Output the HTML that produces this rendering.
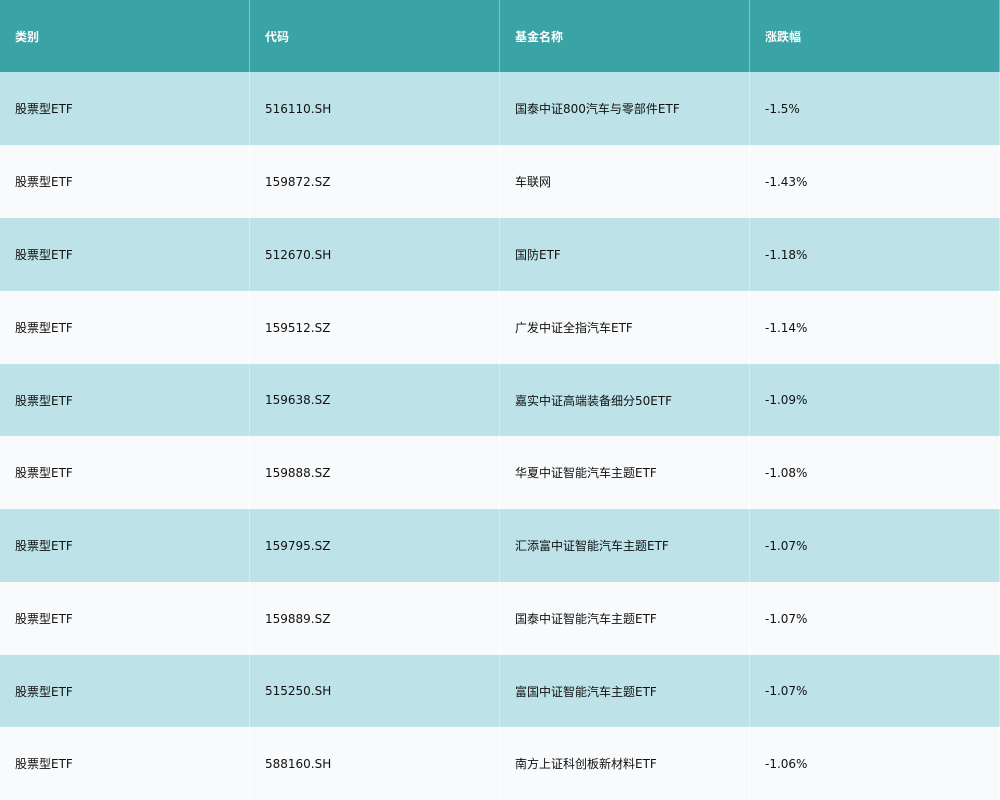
<!DOCTYPE html>
<html><head><meta charset="utf-8"><style>
body{margin:0;width:1000px;height:800px;overflow:hidden;font-family:"DejaVu Sans","Noto Sans CJK SC",sans-serif;font-size:12px;color:#111;}
.r{position:absolute;left:0;width:1000px;display:flex;}
.c{width:249px;border-right:1px solid rgba(255,255,255,.35);box-sizing:content-box;padding-left:15px;display:flex;align-items:center;box-sizing:border-box;width:250px;}
.h{background:#3aa3a6;color:#fff;font-weight:bold;}
.a{background:#bde3e9;}
.b{background:#f8fafc;}
.b .c{border-right:1px solid #fff;}
</style></head><body>
<div class="r h" style="top:0;height:72px"><div class="c">类别</div><div class="c">代码</div><div class="c">基金名称</div><div class="c">涨跌幅</div></div>
<div class="r a" style="top:72px;height:73px"><div class="c">股票型ETF</div><div class="c">516110.SH</div><div class="c">国泰中证800汽车与零部件ETF</div><div class="c">-1.5%</div></div>
<div class="r b" style="top:145px;height:73px"><div class="c">股票型ETF</div><div class="c">159872.SZ</div><div class="c">车联网</div><div class="c">-1.43%</div></div>
<div class="r a" style="top:218px;height:73px"><div class="c">股票型ETF</div><div class="c">512670.SH</div><div class="c">国防ETF</div><div class="c">-1.18%</div></div>
<div class="r b" style="top:291px;height:73px"><div class="c">股票型ETF</div><div class="c">159512.SZ</div><div class="c">广发中证全指汽车ETF</div><div class="c">-1.14%</div></div>
<div class="r a" style="top:364px;height:72px"><div class="c">股票型ETF</div><div class="c">159638.SZ</div><div class="c">嘉实中证高端装备细分50ETF</div><div class="c">-1.09%</div></div>
<div class="r b" style="top:436px;height:73px"><div class="c">股票型ETF</div><div class="c">159888.SZ</div><div class="c">华夏中证智能汽车主题ETF</div><div class="c">-1.08%</div></div>
<div class="r a" style="top:509px;height:73px"><div class="c">股票型ETF</div><div class="c">159795.SZ</div><div class="c">汇添富中证智能汽车主题ETF</div><div class="c">-1.07%</div></div>
<div class="r b" style="top:582px;height:73px"><div class="c">股票型ETF</div><div class="c">159889.SZ</div><div class="c">国泰中证智能汽车主题ETF</div><div class="c">-1.07%</div></div>
<div class="r a" style="top:655px;height:72px"><div class="c">股票型ETF</div><div class="c">515250.SH</div><div class="c">富国中证智能汽车主题ETF</div><div class="c">-1.07%</div></div>
<div class="r b" style="top:727px;height:73px"><div class="c">股票型ETF</div><div class="c">588160.SH</div><div class="c">南方上证科创板新材料ETF</div><div class="c">-1.06%</div></div>
</body></html>
